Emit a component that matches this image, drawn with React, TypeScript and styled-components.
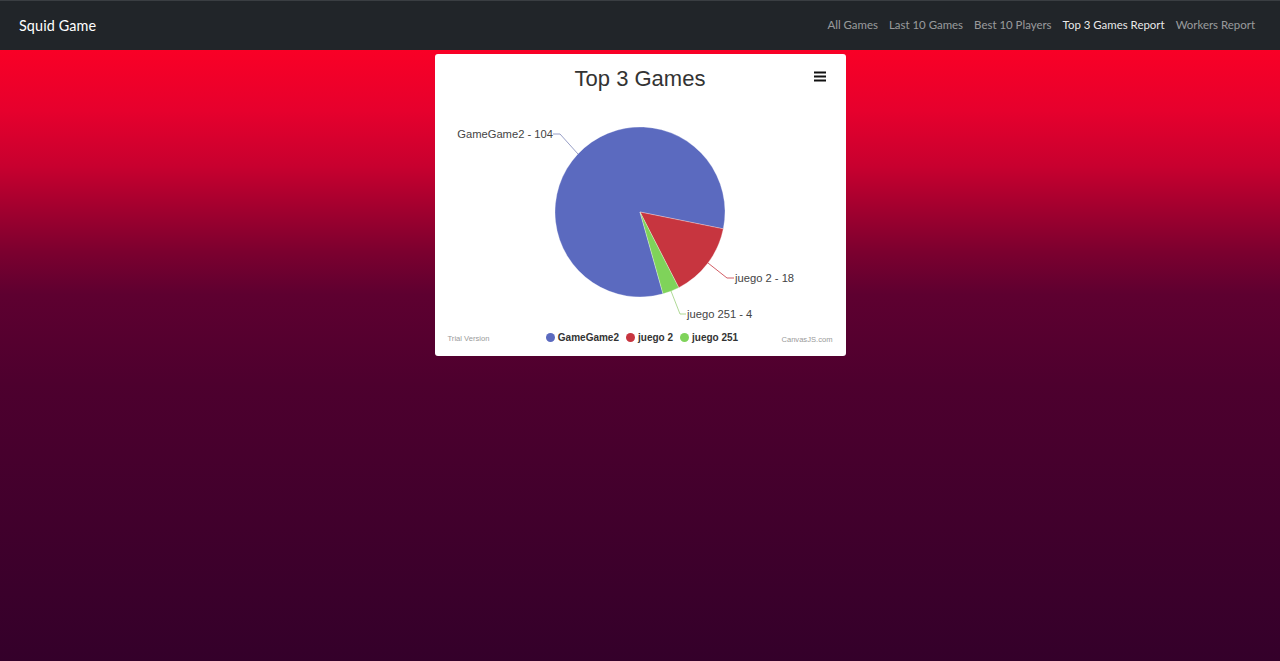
import React from 'react';
import styled, { createGlobalStyle } from 'styled-components';

const GlobalStyle = createGlobalStyle`
  html, body {
    margin: 0;
    padding: 0;
    height: 100%;
  }
  body {
    font-family: Lato, "Noto Sans", sans-serif;
    background: #34002a;
  }
  #root {
    min-height: 100vh;
  }
`;

const Page = styled.div`
  display: flex;
  flex-direction: column;
  min-height: 100vh;
`;

const NavBar = styled.nav`
  height: 50px;
  box-sizing: border-box;
  border-top: 1px solid #3a3e42;
  background: #212529;
  display: flex;
  align-items: center;
  justify-content: space-between;
  padding: 0 25px 0 19px;
`;

const Brand = styled.a`
  color: #fff;
  font-size: 14.4px;
  letter-spacing: 0.1px;
`;

const NavLinks = styled.ul`
  display: flex;
  list-style: none;
  margin: 0;
  padding: 0 0 2px;
  gap: 11px;
`;

const NavLink = styled.li<{ $active?: boolean }>`
  font-size: 11.45px;
  color: ${(p) => (p.$active ? 'rgba(255,255,255,0.92)' : 'rgba(255,255,255,0.55)')};
`;

const Main = styled.main`
  flex: 1;
  display: flex;
  justify-content: center;
  align-items: flex-start;
  padding-top: 4px;
  background: linear-gradient(
    to bottom,
    #f90026 0%,
    #e6002d 10%,
    #c8002f 19%,
    #a2002f 26%,
    #7c002f 33%,
    #5e0030 40%,
    #4d002e 55%,
    #34002a 100%
  );
`;

const Card = styled.section`
  width: 411px;
  height: 302px;
  box-sizing: border-box;
  background: #fff;
  border-radius: 3px;
  display: flex;
  flex-direction: column;
  font-family: "Liberation Sans", Arial, sans-serif;
`;

const ChartHeader = styled.header`
  height: 50px;
  display: grid;
  grid-template-columns: 1fr auto 1fr;
  align-items: start;
`;

const Title = styled.h2`
  grid-column: 2;
  margin: 12px 0 0;
  font-size: 22px;
  font-weight: normal;
  color: #333;
`;

const MenuButton = styled.button`
  grid-column: 3;
  justify-self: end;
  margin: 15px 18px 0 0;
  padding: 2px;
  border: none;
  background: transparent;
  display: flex;
`;

const ChartSvg = styled.svg`
  display: block;
  width: 411px;
  height: 220px;
`;

const Footer = styled.footer`
  height: 26px;
  display: grid;
  grid-template-columns: 1fr auto 1fr;
  align-items: center;
  padding: 0 13px;
`;

const Credit = styled.span<{ $right?: boolean }>`
  font-size: 7.6px;
  color: #9a9a9a;
  justify-self: ${(p) => (p.$right ? 'end' : 'start')};
  padding-top: ${(p) => (p.$right ? '5px' : '3px')};
`;

const Legend = styled.ul`
  display: flex;
  list-style: none;
  margin: 0 0 0 4px;
  padding: 0;
  gap: 7px;
`;

const LegendItem = styled.li`
  display: flex;
  align-items: center;
  gap: 3px;
  font-size: 10px;
  font-weight: bold;
  color: #333;
`;

const Dot = styled.span<{ $color: string }>`
  width: 9px;
  height: 9px;
  border-radius: 50%;
  background: ${(p) => p.$color};
`;

const links = ['All Games', 'Last 10 Games', 'Best 10 Players', 'Top 3 Games Report', 'Workers Report'];

const data = [
  { name: 'GameGame2', value: 104, color: '#5b6abf' },
  { name: 'juego 2', value: 18, color: '#c7353f' },
  { name: 'juego 251', value: 4, color: '#7fd35a' },
];

// label anchors, in chart coordinates
const labels = [
  { text: 'GameGame2 - 104', line: '143,50 125,30 118,30', x: 118, y: 34, anchor: 'end', lineColor: '#7d86b8' },
  { text: 'juego 2 - 18', line: '273,159 292,174 299,174', x: 300, y: 178, anchor: 'start', lineColor: '#c7353f' },
  { text: 'juego 251 - 4', line: '236,187 245,210 251,210', x: 252, y: 214, anchor: 'start', lineColor: '#9ccf7c' },
];

const CX = 205;
const CY = 108;
const R = 85;
const START = 74.3;

function point(deg: number) {
  const a = (deg * Math.PI) / 180;
  return `${(CX + R * Math.cos(a)).toFixed(2)},${(CY + R * Math.sin(a)).toFixed(2)}`;
}

function slices() {
  const total = data.reduce((s, d) => s + d.value, 0);
  let angle = START;
  return data.map((d) => {
    const sweep = (d.value / total) * 360;
    const from = angle;
    const to = angle + sweep;
    angle = to;
    const large = sweep > 180 ? 1 : 0;
    return {
      ...d,
      path: `M${CX},${CY} L${point(from)} A${R},${R} 0 ${large} 1 ${point(to)} Z`,
    };
  });
}

export default function App() {
  return (
    <Page>
      <GlobalStyle />
      <NavBar>
        <Brand>Squid Game</Brand>
        <NavLinks>
          {links.map((l) => (
            <NavLink key={l} $active={l === 'Top 3 Games Report'}>
              {l}
            </NavLink>
          ))}
        </NavLinks>
      </NavBar>
      <Main>
        <Card>
          <ChartHeader>
            <Title>Top 3 Games</Title>
            <MenuButton aria-label="menu">
              <svg width="12" height="11" viewBox="0 0 12 11">
                <rect x="0" y="0.5" width="12" height="2" fill="#111" />
                <rect x="0" y="4.5" width="12" height="2" fill="#111" />
                <rect x="0" y="8.5" width="12" height="2" fill="#111" />
              </svg>
            </MenuButton>
          </ChartHeader>
          <ChartSvg viewBox="0 0 411 220">
            {slices().map((s) => (
              <path key={s.name} d={s.path} fill={s.color} stroke="#fff" strokeWidth="0.3" />
            ))}
            {labels.map((l) => (
              <g key={l.text}>
                <polyline points={l.line} fill="none" stroke={l.lineColor} strokeWidth="0.8" />
                <text x={l.x} y={l.y} textAnchor={l.anchor as 'start' | 'end'} fontSize="11.2" fill="#444" fontFamily="Liberation Sans, Arial, sans-serif">
                  {l.text}
                </text>
              </g>
            ))}
          </ChartSvg>
          <Footer>
            <Credit>Trial Version</Credit>
            <Legend>
              {data.map((d) => (
                <LegendItem key={d.name}>
                  <Dot $color={d.color} />
                  {d.name}
                </LegendItem>
              ))}
            </Legend>
            <Credit $right>CanvasJS.com</Credit>
          </Footer>
        </Card>
      </Main>
    </Page>
  );
}
